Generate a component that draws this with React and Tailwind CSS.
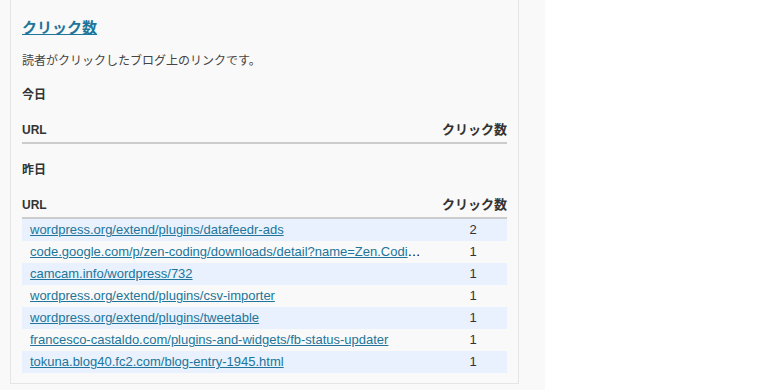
const rows = [
  { url: "wordpress.org/extend/plugins/datafeedr-ads", count: 2 },
  { url: "code.google.com/p/zen-coding/downloads/detail?name=Zen.Coding-for-WordPress", count: 1 },
  { url: "camcam.info/wordpress/732", count: 1 },
  { url: "wordpress.org/extend/plugins/csv-importer", count: 1 },
  { url: "wordpress.org/extend/plugins/tweetable", count: 1 },
  { url: "francesco-castaldo.com/plugins-and-widgets/fb-status-updater", count: 1 },
  { url: "tokuna.blog40.fc2.com/blog-entry-1945.html", count: 1 },
];

function Header() {
  return (
    <div className="flex justify-between items-end pb-1 border-b-2 border-[#cccccc] font-bold text-[#333] leading-4">
      <span>URL</span>
      <span className="text-[13px]">クリック数</span>
    </div>
  );
}

export default function App() {
  return (
    <div
      className="h-[390px] w-[760px] bg-white text-[12px]"
      style={{ fontFamily: '"Liberation Sans", "Noto Sans CJK JP", sans-serif' }}
    >
      <div className="h-full w-[545px] bg-[#f9f9f9]">
        <div className="ml-[10px] w-[509px] border border-t-0 border-[#e5e5e5] bg-[#f9f9f9] px-[11px] pt-[18px] pb-[10px]">
          <h3 className="text-[15px] leading-5 font-bold">
            <a href="#" className="text-[#21759b] underline">クリック数</a>
          </h3>
          <p className="mt-[15px] leading-4 text-[#444]">読者がクリックしたブログ上のリンクです。</p>

          <h4 className="mt-[18px] leading-4 font-bold text-[#333]">今日</h4>
          <div className="mt-[19px]">
            <Header />
          </div>

          <h4 className="mt-[18px] leading-4 font-bold text-[#333]">昨日</h4>
          <div className="mt-[19px]">
            <Header />
            {rows.map((r, i) => (
              <div
                key={i}
                className={`flex items-center h-[22px] text-[13px] ${i % 2 === 0 ? "bg-[#e8f1fd]" : ""}`}
              >
                <div className="flex-1 min-w-0 truncate pl-2 pr-3.5">
                  <a href="#" className="text-[#21759b] underline">{r.url}</a>
                </div>
                <div className="w-[68px] text-center text-[#333]">{r.count}</div>
              </div>
            ))}
          </div>
        </div>
      </div>
    </div>
  );
}
